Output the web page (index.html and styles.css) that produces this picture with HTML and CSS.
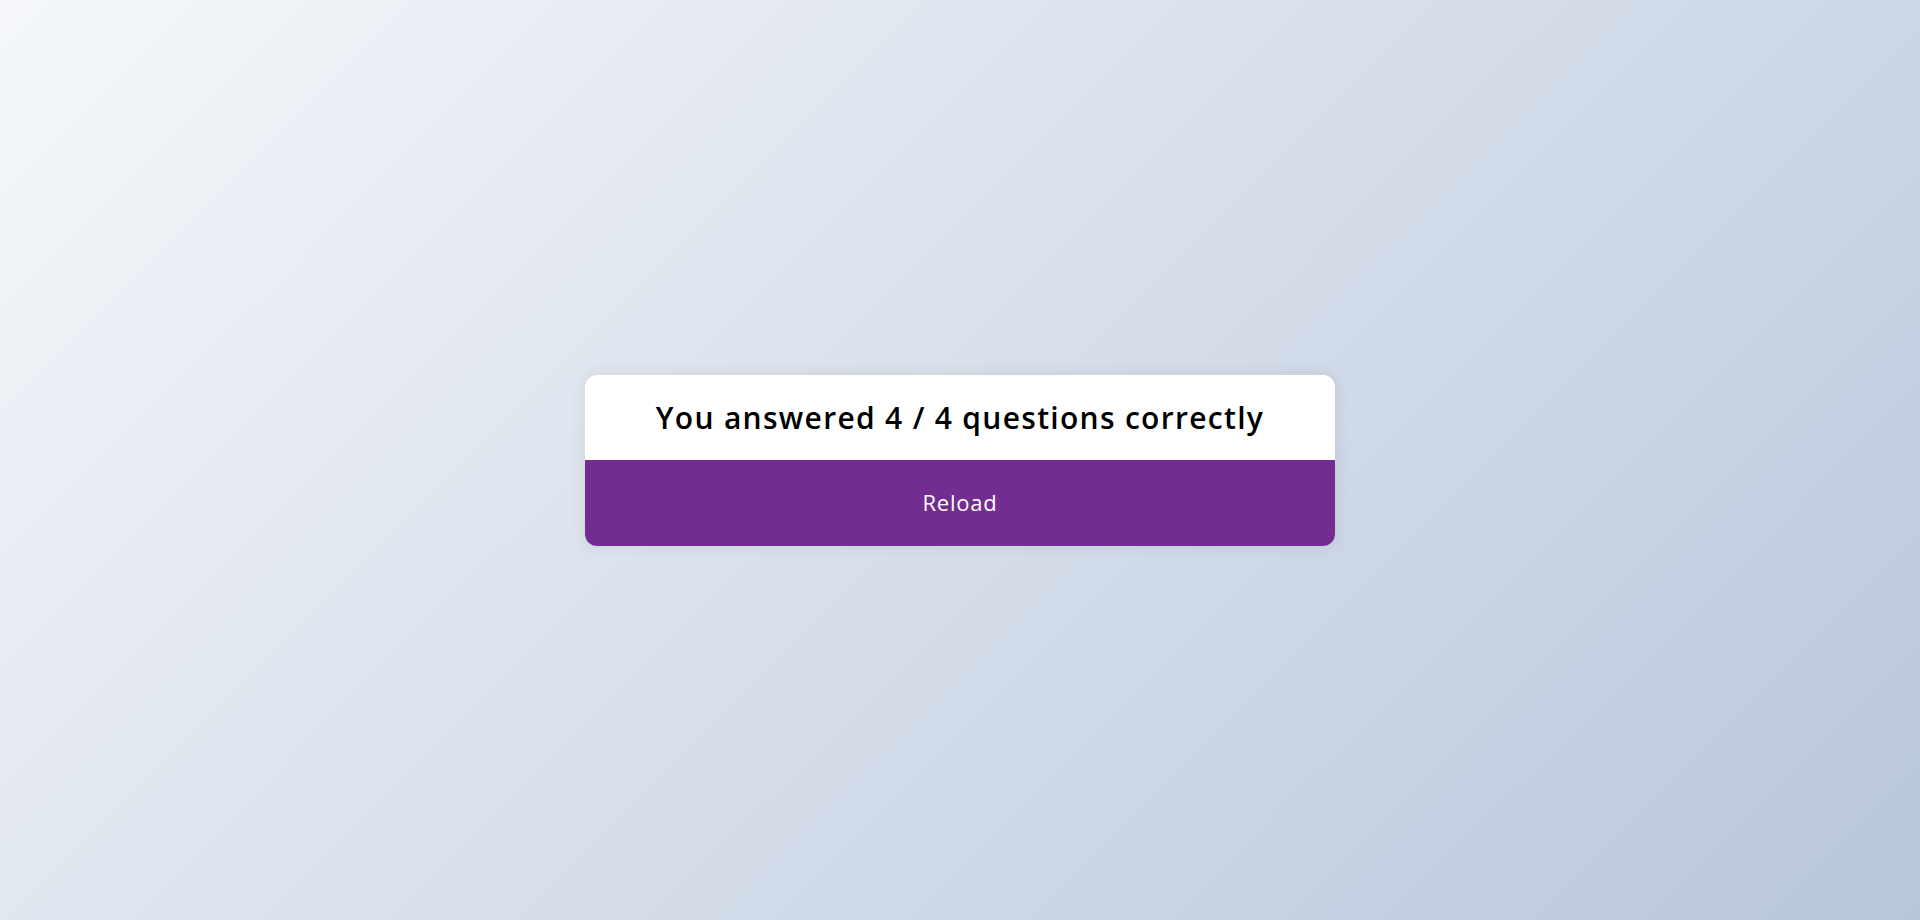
FILE: index.html
```html
<!DOCTYPE html>
<html lang="en">
<head>
<meta charset="UTF-8">
<title>Quiz App</title>
<link rel="stylesheet" href="styles.css">
</head>
<body>
<div class="quiz-container">
  <h2 class="result">You answered 4 / 4 questions correctly</h2>
  <button class="reload-btn">Reload</button>
</div>
</body>
</html>
```
FILE: styles.css
```css
* { box-sizing: border-box; }
html, body { height: 100%; }
body {
  margin: 0;
  font-family: "Open Sans", "Noto Sans", sans-serif;
  background: linear-gradient(135deg, #f5f7fa 0%, #b8c6db 100%);
  display: flex;
  align-items: center;
  justify-content: center;
  overflow: hidden;
}
.quiz-container {
  width: 750px;
  background: #fff;
  border-radius: 12px;
  box-shadow: 0 0 12px 3px rgba(100, 100, 100, 0.1);
  overflow: hidden;
}
.result {
  margin: 0;
  padding: 20px;
  font-size: 30px;
  line-height: 45px;
  font-weight: 600;
  letter-spacing: 1.3px;
  text-align: center;
  color: #000;
}
.reload-btn {
  display: block;
  width: 100%;
  border: none;
  margin: 0;
  padding: 26px 26px 27px;
  background: #732d91;
  color: #fff;
  font-family: inherit;
  font-size: 22px;
  line-height: 33px;
  font-weight: 400;
  letter-spacing: 0.8px;
  cursor: pointer;
}
```
